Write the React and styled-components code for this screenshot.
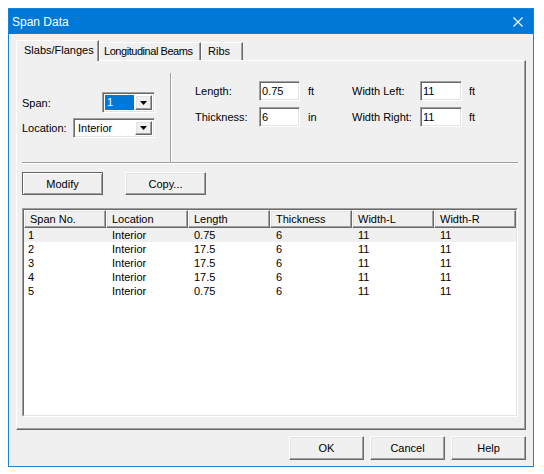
import React from "react";
import styled, { createGlobalStyle, css } from "styled-components";

const GlobalStyle = createGlobalStyle`
  body {
    margin: 8px;
    background: #ffffff;
    font-family: "Liberation Sans", Arial, sans-serif;
    font-size: 11px;
    color: #000000;
  }
`;

const sunken = css`
  border-style: solid;
  border-width: 1px;
  border-color: #a0a0a0 #ffffff #ffffff #a0a0a0;
  box-shadow: inset 1px 1px 0 #696969, inset -1px -1px 0 #e3e3e3;
`;

const raised = css`
  border-style: solid;
  border-width: 1px;
  border-color: #ffffff #696969 #696969 #ffffff;
  box-shadow: inset -1px -1px 0 #a0a0a0, inset 1px 1px 0 #e3e3e3;
`;

const Window = styled.div`
  width: 526px;
  height: 459px;
  box-sizing: border-box;
  border: 1px solid #1883d7;
  background: #f0f0f0;
  display: flex;
  flex-direction: column;
`;

const TitleBar = styled.div`
  height: 25px;
  flex-shrink: 0;
  background: #0078d7;
  color: #ffffff;
  font-size: 12px;
  display: flex;
  align-items: center;
  justify-content: space-between;
  padding: 0 10px 0 3px;
`;

const Body = styled.div`
  flex: 1;
  display: flex;
  flex-direction: column;
  padding: 6px 7px 6px 7px;
`;

const TabStrip = styled.div`
  height: 20px;
  display: flex;
  align-items: flex-end;
  position: relative;
  z-index: 1;
`;

const Tab = styled.div`
  box-sizing: border-box;
  width: ${(p) => p.$width}px;
  padding-left: ${(p) => p.$pad}px;
  height: ${(p) => (p.$active ? 21 : 18)}px;
  margin-bottom: ${(p) => (p.$active ? -1 : 0)}px;
  line-height: ${(p) => (p.$active ? 18 : 17)}px;
  letter-spacing: ${(p) => p.$spacing || 0}px;
  background: #f0f0f0;
  border-top: 1px solid #ffffff;
  border-left: 1px solid #ffffff;
  border-right: 1px solid #696969;
  box-shadow: inset -1px 0 0 #a0a0a0;
  white-space: nowrap;
  overflow: hidden;
`;

const Panel = styled.div`
  flex: 1;
  border-style: solid;
  border-width: 1px;
  border-color: #ffffff #696969 #696969 #ffffff;
  box-shadow: inset -1px -1px 0 #a0a0a0;
  padding: 0 7px 0 5px;
  display: flex;
  flex-direction: column;
`;

const TopSection = styled.div`
  height: 101px;
  display: flex;
`;

const LeftGroup = styled.div`
  width: 148px;
  padding-top: 31px;
  display: flex;
  flex-direction: column;
  gap: 5px;
`;

const FieldRow = styled.div`
  width: 133px;
  display: flex;
  align-items: center;
  justify-content: space-between;
`;

const RightGroup = styled.div`
  margin-top: 12px;
  border-left: 1px solid #a0a0a0;
  box-shadow: inset 1px 0 0 #ffffff;
  padding: 8px 0 0 24px;
  display: grid;
  grid-template-columns: 64px 41px 52px 68px 42px auto;
  grid-auto-rows: 20px;
  row-gap: 6px;
  align-items: center;
  align-content: start;
`;

const Unit = styled.span`
  padding-left: ${(p) => p.$pad}px;
`;

const TextBox = styled.div`
  ${sunken};
  box-sizing: border-box;
  height: 20px;
  background: #ffffff;
  padding-left: 2px;
  line-height: 18px;
`;

const Combo = styled.div`
  ${sunken};
  box-sizing: border-box;
  width: ${(p) => p.$width}px;
  height: ${(p) => p.$height}px;
  background: #ffffff;
  padding: 2px;
  display: flex;
`;

const ComboText = styled.div`
  flex: 1;
  padding-left: 2px;
  line-height: 15px;
  background: ${(p) => (p.$selected ? "#0078d7" : "transparent")};
  color: ${(p) => (p.$selected ? "#ffffff" : "#000000")};
  margin-right: 1px;
`;

const ComboButton = styled.div`
  ${raised};
  box-sizing: border-box;
  width: 17px;
  background: #f0f0f0;
  display: flex;
  align-items: center;
  justify-content: center;
`;

const Separator = styled.div`
  border-top: 1px solid #a0a0a0;
  border-bottom: 1px solid #ffffff;
`;

const ButtonRow = styled.div`
  display: flex;
  gap: ${(p) => p.$gap}px;
  margin-top: ${(p) => p.$top}px;
  justify-content: ${(p) => p.$justify || "flex-start"};
`;

const Button = styled.div`
  ${raised};
  box-sizing: border-box;
  width: ${(p) => p.$width}px;
  height: ${(p) => p.$height}px;
  background: #f0f0f0;
  display: flex;
  align-items: center;
  justify-content: center;
  ${(p) =>
    p.$default &&
    css`
      border-color: #646464;
      box-shadow: inset 1px 1px 0 #ffffff, inset -1px -1px 0 #a0a0a0;
    `}
`;

const ListFrame = styled.div`
  margin-top: 13px;
  height: 209px;
  box-sizing: border-box;
  border-style: solid;
  border-width: 1px;
  border-color: #a0a0a0 #ffffff #ffffff #a0a0a0;
`;

const ListInner = styled.div`
  height: 100%;
  box-sizing: border-box;
  border-style: solid;
  border-width: 1px;
  border-color: #696969 #e3e3e3 #e3e3e3 #696969;
  background: #ffffff;
`;

const HeaderRow = styled.div`
  display: grid;
  grid-template-columns: repeat(6, 82px);
  height: 18px;
`;

const HeaderCell = styled.div`
  ${raised};
  box-sizing: border-box;
  background: #f0f0f0;
  padding-left: 5px;
  line-height: 16px;
`;

const DataRow = styled.div`
  display: grid;
  grid-template-columns: repeat(6, 82px);
  height: 14px;
  line-height: 14px;
  background: ${(p) => (p.$hover ? "#f0f0f0" : "#ffffff")};
  &:first-of-type {
    margin-top: 1px;
  }
`;

const Cell = styled.div`
  padding-left: ${(p) => p.$pad}px;
  white-space: nowrap;
`;

const Arrow = () => (
  <svg width="7" height="4" viewBox="0 0 7 4">
    <path d="M0 0h7L3.5 4z" fill="#000" />
  </svg>
);

const CloseIcon = () => (
  <svg width="10" height="10" viewBox="0 0 10 10">
    <path d="M0.5 0.5l9 9M9.5 0.5l-9 9" stroke="#fff" strokeWidth="1.1" />
  </svg>
);

const tabs = [
  { label: "Slabs/Flanges", width: 83, pad: 7, active: true },
  { label: "Longitudinal Beams", width: 102, pad: 4, spacing: -0.45 },
  { label: "Ribs", width: 42, pad: 6 },
];

const columns = ["Span No.", "Location", "Length", "Thickness", "Width-L", "Width-R"];

const rows = [
  ["1", "Interior", "0.75", "6", "11", "11"],
  ["2", "Interior", "17.5", "6", "11", "11"],
  ["3", "Interior", "17.5", "6", "11", "11"],
  ["4", "Interior", "17.5", "6", "11", "11"],
  ["5", "Interior", "0.75", "6", "11", "11"],
];

export default function App() {
  return (
    <>
      <GlobalStyle />
      <Window>
        <TitleBar>
          <span>Span Data</span>
          <CloseIcon />
        </TitleBar>
        <Body>
          <TabStrip>
            {tabs.map((t) => (
              <Tab
                key={t.label}
                $width={t.width}
                $pad={t.pad}
                $active={t.active}
                $spacing={t.spacing}
              >
                {t.label}
              </Tab>
            ))}
          </TabStrip>
          <Panel>
            <TopSection>
              <LeftGroup>
                <FieldRow>
                  <span>Span:</span>
                  <Combo $width={53} $height={21}>
                    <ComboText $selected>1</ComboText>
                    <ComboButton>
                      <Arrow />
                    </ComboButton>
                  </Combo>
                </FieldRow>
                <FieldRow>
                  <span>Location:</span>
                  <Combo $width={82} $height={20}>
                    <ComboText>Interior</ComboText>
                    <ComboButton>
                      <Arrow />
                    </ComboButton>
                  </Combo>
                </FieldRow>
              </LeftGroup>
              <RightGroup>
                <span>Length:</span>
                <TextBox>0.75</TextBox>
                <Unit $pad={8}>ft</Unit>
                <span>Width Left:</span>
                <TextBox>11</TextBox>
                <Unit $pad={7}>ft</Unit>
                <span>Thickness:</span>
                <TextBox>6</TextBox>
                <Unit $pad={8}>in</Unit>
                <span>Width Right:</span>
                <TextBox>11</TextBox>
                <Unit $pad={7}>ft</Unit>
              </RightGroup>
            </TopSection>
            <Separator />
            <ButtonRow $gap={22} $top={8}>
              <Button $width={81} $height={23} $default>
                Modify
              </Button>
              <Button $width={81} $height={23}>
                Copy...
              </Button>
            </ButtonRow>
            <ListFrame>
              <ListInner>
                <HeaderRow>
                  {columns.map((c) => (
                    <HeaderCell key={c}>{c}</HeaderCell>
                  ))}
                </HeaderRow>
                {rows.map((r, i) => (
                  <DataRow key={i} $hover={i === 0}>
                    {r.map((v, j) => (
                      <Cell key={j} $pad={j === 0 ? 4 : 6}>
                        {v}
                      </Cell>
                    ))}
                  </DataRow>
                ))}
              </ListInner>
            </ListFrame>
          </Panel>
          <ButtonRow $gap={6} $top={6} $justify="flex-end">
            <Button $width={75} $height={24}>OK</Button>
            <Button $width={75} $height={24}>Cancel</Button>
            <Button $width={75} $height={24}>Help</Button>
          </ButtonRow>
        </Body>
      </Window>
    </>
  );
}
